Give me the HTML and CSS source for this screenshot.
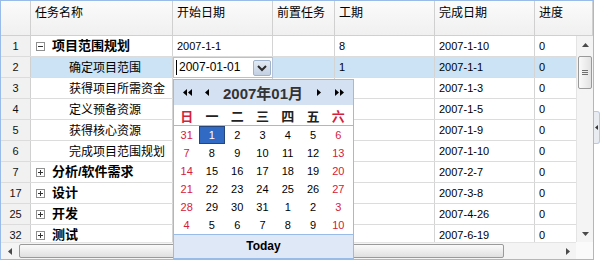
FILE: index.html
```html
<!DOCTYPE html>
<html>
<head>
<meta charset="utf-8">
<link rel="stylesheet" href="styles.css">
</head>
<body>
<div class="frame">
  <div class="head">
    <div class="hc c-num"></div>
    <div class="hc c-name">任务名称</div>
    <div class="hc c-start">开始日期</div>
    <div class="hc c-pred">前置任务</div>
    <div class="hc c-dur">工期</div>
    <div class="hc c-fin">完成日期</div>
    <div class="hc c-prog">进度</div>
  </div>
  <div class="body">
    <div class="row">
      <div class="cell c-num">1</div>
      <div class="cell c-name"><span class="tog minus"></span><span class="l0">项目范围规划</span></div>
      <div class="cell c-start">2007-1-1</div>
      <div class="cell c-pred"></div>
      <div class="cell c-dur">8</div>
      <div class="cell c-fin">2007-1-10</div>
      <div class="cell c-prog">0</div>
    </div>
    <div class="row sel">
      <div class="cell c-num">2</div>
      <div class="cell c-name"><span class="l1">确定项目范围</span></div>
      <div class="cell c-start"></div>
      <div class="cell c-pred"></div>
      <div class="cell c-dur">1</div>
      <div class="cell c-fin">2007-1-1</div>
      <div class="cell c-prog">0</div>
    </div>
    <div class="row">
      <div class="cell c-num">3</div>
      <div class="cell c-name"><span class="l1">获得项目所需资金</span></div>
      <div class="cell c-start"></div>
      <div class="cell c-pred"></div>
      <div class="cell c-dur"></div>
      <div class="cell c-fin">2007-1-3</div>
      <div class="cell c-prog">0</div>
    </div>
    <div class="row">
      <div class="cell c-num">4</div>
      <div class="cell c-name"><span class="l1">定义预备资源</span></div>
      <div class="cell c-start"></div>
      <div class="cell c-pred"></div>
      <div class="cell c-dur"></div>
      <div class="cell c-fin">2007-1-5</div>
      <div class="cell c-prog">0</div>
    </div>
    <div class="row">
      <div class="cell c-num">5</div>
      <div class="cell c-name"><span class="l1">获得核心资源</span></div>
      <div class="cell c-start"></div>
      <div class="cell c-pred"></div>
      <div class="cell c-dur"></div>
      <div class="cell c-fin">2007-1-9</div>
      <div class="cell c-prog">0</div>
    </div>
    <div class="row">
      <div class="cell c-num">6</div>
      <div class="cell c-name"><span class="l1">完成项目范围规划</span></div>
      <div class="cell c-start"></div>
      <div class="cell c-pred"></div>
      <div class="cell c-dur"></div>
      <div class="cell c-fin">2007-1-10</div>
      <div class="cell c-prog">0</div>
    </div>
    <div class="row">
      <div class="cell c-num">7</div>
      <div class="cell c-name"><span class="tog plus"></span><span class="l0">分析/软件需求</span></div>
      <div class="cell c-start"></div>
      <div class="cell c-pred"></div>
      <div class="cell c-dur"></div>
      <div class="cell c-fin">2007-2-7</div>
      <div class="cell c-prog">0</div>
    </div>
    <div class="row">
      <div class="cell c-num">17</div>
      <div class="cell c-name"><span class="tog plus"></span><span class="l0">设计</span></div>
      <div class="cell c-start"></div>
      <div class="cell c-pred"></div>
      <div class="cell c-dur"></div>
      <div class="cell c-fin">2007-3-8</div>
      <div class="cell c-prog">0</div>
    </div>
    <div class="row">
      <div class="cell c-num">25</div>
      <div class="cell c-name"><span class="tog plus"></span><span class="l0">开发</span></div>
      <div class="cell c-start"></div>
      <div class="cell c-pred"></div>
      <div class="cell c-dur"></div>
      <div class="cell c-fin">2007-4-26</div>
      <div class="cell c-prog">0</div>
    </div>
    <div class="row">
      <div class="cell c-num">32</div>
      <div class="cell c-name"><span class="tog plus"></span><span class="l0">测试</span></div>
      <div class="cell c-start"></div>
      <div class="cell c-pred"></div>
      <div class="cell c-dur"></div>
      <div class="cell c-fin">2007-6-19</div>
      <div class="cell c-prog">0</div>
    </div>
  </div>
  <div class="vscroll">
    <div class="sbtn"><svg width="7" height="4" viewBox="0 0 7 4"><polygon points="0,4 7,4 3.5,0" fill="#4a4a4a"/></svg></div>
    <div class="vthumb"><span class="grip"></span></div>
    <div class="sfill"></div>
    <div class="sbtn"><svg width="7" height="4" viewBox="0 0 7 4"><polygon points="0,0 7,0 3.5,4" fill="#4a4a4a"/></svg></div>
  </div>
  <div class="hscroll">
    <div class="hbtn"><svg width="4" height="7" viewBox="0 0 4 7"><polygon points="4,0 4,7 0,3.5" fill="#4a4a4a"/></svg></div>
    <div class="hthumb"></div>
    <div class="sfill"></div>
    <div class="hbtn"><svg width="4" height="7" viewBox="0 0 4 7"><polygon points="0,0 0,7 4,3.5" fill="#4a4a4a"/></svg></div>
  </div>
  <div class="corner"></div>

  <div class="editor">
    <span class="etext">2007-01-01</span>
    <span class="ebtn"><svg width="10" height="7" viewBox="0 0 10 7"><polyline points="1,1 5,5 9,1" fill="none" stroke="#2b2b2b" stroke-width="2"/></svg></span>
  </div>

  <div class="cal">
    <div class="cal-head">
      <span class="nav"><svg width="9" height="7" viewBox="0 0 9 7"><polygon points="4,0 4,7 0,3.5" fill="#000"/><polygon points="9,0 9,7 5,3.5" fill="#000"/></svg></span>
      <span class="nav"><svg width="4" height="7" viewBox="0 0 4 7"><polygon points="4,0 4,7 0,3.5" fill="#000"/></svg></span>
      <span class="title">2007年01月</span>
      <span class="nav"><svg width="4" height="7" viewBox="0 0 4 7"><polygon points="0,0 0,7 4,3.5" fill="#000"/></svg></span>
      <span class="nav"><svg width="9" height="7" viewBox="0 0 9 7"><polygon points="0,0 0,7 4,3.5" fill="#000"/><polygon points="5,0 5,7 9,3.5" fill="#000"/></svg></span>
    </div>
    <div class="cal-week">
      <span class="we">日</span><span>一</span><span>二</span><span>三</span><span>四</span><span>五</span><span class="we">六</span>
    </div>
    <div class="cal-days">
      <span class="we">31</span><span class="cur">1</span><span>2</span><span>3</span><span>4</span><span>5</span><span class="we">6</span>
      <span class="we">7</span><span>8</span><span>9</span><span>10</span><span>11</span><span>12</span><span class="we">13</span>
      <span class="we">14</span><span>15</span><span>16</span><span>17</span><span>18</span><span>19</span><span class="we">20</span>
      <span class="we">21</span><span>22</span><span>23</span><span>24</span><span>25</span><span>26</span><span class="we">27</span>
      <span class="we">28</span><span>29</span><span>30</span><span>31</span><span>1</span><span>2</span><span class="we">3</span>
      <span class="we">4</span><span>5</span><span>6</span><span>7</span><span>8</span><span>9</span><span class="we">10</span>
    </div>
    <div class="cal-foot">Today</div>
  </div>
</div>
<div class="side">
  <div class="handle"><svg width="3" height="5" viewBox="0 0 3 5"><polygon points="3,0 3,5 0,2.5" fill="#333"/></svg></div>
</div>
</body>
</html>
```

FILE: styles.css
```css
* { box-sizing: border-box; margin: 0; padding: 0; }

body {
  margin: 0;
  width: 600px;
  height: 260px;
  overflow: hidden;
  background: #fff;
  display: flex;
  font-family: "Liberation Sans", "Noto Sans CJK SC", sans-serif;
  font-size: 12px;
  color: #000;
}

.frame {
  position: relative;
  width: 594px;
  height: 260px;
  border: 1px solid #99bbe8;
  display: grid;
  grid-template-columns: 575px 17px;
  grid-template-rows: 35px 206px 17px;
}

/* header */
.head {
  grid-column: 1 / 3;
  display: flex;
  background: linear-gradient(#fbfbfb, #f0f0f0);
  border-bottom: 1px solid #d0d0d0;
}
.hc {
  border-right: 1px solid #d0d0d0;
  padding: 2px 4px 0;
  line-height: 17px;
  font-family: "Noto Sans CJK SC", sans-serif;
  font-size: 12px;
  white-space: nowrap;
}

.c-num { width: 30px; }
.c-name { width: 142px; }
.c-start { width: 100px; }
.c-pred { width: 62px; }
.c-dur { width: 100px; }
.c-fin { width: 100px; }
.hc.c-prog { width: 58px; }

/* body */
.body {
  grid-column: 1;
  grid-row: 2;
  overflow: hidden;
  background: #fff;
}
.row {
  display: flex;
  height: 21px;
  border-bottom: 1px solid #dcdcdc;
}
.cell {
  border-right: 1px solid #d4d4d4;
  padding: 0 4px;
  line-height: 20px;
  height: 20px;
  white-space: nowrap;
  overflow: hidden;
  font-size: 11px;
  display: flex;
  align-items: center;
}
.cell.c-num {
  justify-content: center;
  background: #f1f1f1;
  border-right-color: #d0d0d0;
  color: #111;
  padding: 0;
}
.cell.c-prog {
  flex: 1;
  border-right: none;
}
.row.sel .cell:not(.c-num) { background: #cbe3f4; }

.c-name .l0 {
  font-family: "Liberation Sans", "Noto Sans CJK SC", sans-serif;
  font-weight: bold;
  font-size: 13px;
}
.c-name .l1 {
  font-family: "Noto Sans CJK SC", sans-serif;
  font-size: 12px;
  margin-left: 34px;
}

.tog {
  position: relative;
  width: 9px;
  height: 9px;
  border: 1px solid #8f8f8f;
  background: #fff;
  margin-left: 1px;
  margin-right: 7px;
  flex: none;
}
.tog::before {
  content: "";
  position: absolute;
  left: 1px;
  top: 3px;
  width: 5px;
  height: 1px;
  background: #333;
}
.tog.plus::after {
  content: "";
  position: absolute;
  left: 3px;
  top: 1px;
  width: 1px;
  height: 5px;
  background: #333;
}

/* scrollbars */
.vscroll {
  grid-column: 2;
  grid-row: 2;
  background: #f4f4f4;
  border-left: 1px solid #e4e4e4;
  display: flex;
  flex-direction: column;
  align-items: center;
}
.sbtn {
  height: 17px;
  width: 100%;
  display: flex;
  align-items: center;
  justify-content: center;
  flex: none;
}
.vthumb {
  margin-top: 3px;
  width: 14px;
  height: 33px;
  border: 1px solid #9a9a9a;
  border-radius: 2px;
  background: linear-gradient(90deg, #fafafa, #e2e2e2);
  display: flex;
  align-items: center;
  justify-content: center;
  flex: none;
}
.grip {
  width: 6px;
  height: 5px;
  border-top: 1px solid #707070;
  border-bottom: 1px solid #707070;
  position: relative;
}
.grip::after {
  content: "";
  position: absolute;
  left: 0;
  top: 1px;
  width: 6px;
  height: 1px;
  background: #707070;
}
.sfill { flex: 1; }

.hscroll {
  grid-column: 1;
  grid-row: 3;
  background: #f4f4f4;
  border-top: 1px solid #e4e4e4;
  display: flex;
  align-items: center;
}
.hbtn {
  width: 17px;
  height: 100%;
  display: flex;
  align-items: center;
  justify-content: center;
  flex: none;
}
.hthumb {
  margin-left: 1px;
  width: 485px;
  height: 14px;
  border: 1px solid #9a9a9a;
  border-radius: 2px;
  background: linear-gradient(#fafafa, #e0e0e0);
}
.corner {
  grid-column: 2;
  grid-row: 3;
  background: #fafafa;
}

/* editor (overlay) */
.editor {
  position: absolute;
  left: 172px;
  top: 56px;
  width: 100px;
  height: 21px;
  background: #fff;
  border: 1px solid #b3c2d6;
  display: flex;
  align-items: center;
}
.etext {
  font-size: 12px;
  padding-left: 2px;
  border-left: 1px solid #000;
  margin-left: 2px;
  line-height: 15px;
}
.ebtn {
  position: absolute;
  left: 79px;
  top: 2px;
  width: 18px;
  height: 16px;
  border: 1px solid #9fb3cc;
  border-radius: 2px;
  background: linear-gradient(#e3eaf3, #c2d0e2);
  display: flex;
  align-items: center;
  justify-content: center;
}

/* calendar popup (overlay) */
.cal {
  position: absolute;
  left: 172px;
  top: 78px;
  width: 181px;
  height: 180px;
  border: 1px solid #99bbe8;
  background: #fff;
  display: flex;
  flex-direction: column;
}
.cal-head {
  height: 25px;
  background: #d3e1f2;
  display: grid;
  grid-template-columns: 20px 20px 1fr 20px 20px;
  padding: 0 4px 0 3px;
  align-items: center;
}
.nav {
  display: flex;
  justify-content: center;
  align-items: center;
}
.title {
  text-align: center;
  font-weight: bold;
  font-size: 15px;
  color: #333;
  font-family: "Liberation Sans", "Noto Sans CJK SC", sans-serif;
}
.cal-week {
  height: 21px;
  border-bottom: 1px solid #99bbe8;
  display: grid;
  grid-template-columns: repeat(7, 1fr);
  padding-right: 2px;
  align-items: center;
  text-align: center;
  font-family: "Noto Sans CJK SC", sans-serif;
  font-weight: bold;
  font-size: 13px;
  color: #222;
}
.we { color: #d3203c; }
.cal-days {
  height: 108px;
  display: grid;
  grid-template-columns: repeat(7, 1fr);
  grid-auto-rows: 18px;
  padding-right: 2px;
  text-align: center;
  font-size: 11px;
  line-height: 18px;
}
.cal-days .cur {
  background: #316ac5;
  color: #fff;
  border: 1px solid #26457a;
  line-height: 17px;
}
.cal-foot {
  flex: 1;
  border-top: 1px solid #99bbe8;
  background: #dfe8f6;
  text-align: center;
  font-weight: bold;
  font-size: 12px;
  line-height: 22px;
}

/* side collapse handle */
.side {
  width: 6px;
  padding-top: 111px;
}
.handle {
  width: 6px;
  height: 33px;
  background: #e9edf2;
  border: 1px solid #b7c9e2;
  border-left: none;
  border-radius: 0 3px 3px 0;
  display: flex;
  align-items: center;
  justify-content: center;
}
```
